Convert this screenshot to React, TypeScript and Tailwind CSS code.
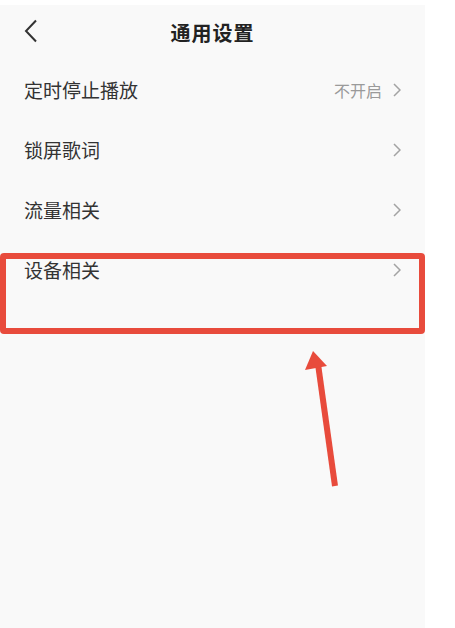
const rows = [
  { label: "定时停止播放", value: "不开启" },
  { label: "锁屏歌词" },
  { label: "流量相关" },
  { label: "设备相关" },
];

function Chevron() {
  return (
    <svg width="8" height="14" viewBox="0 0 8 14" className="shrink-0">
      <polyline points="1,1 7,7 1,13" fill="none" stroke="#a3a3a3" strokeWidth="1.5" />
    </svg>
  );
}

export default function App() {
  return (
    <div
      className="relative w-[455px] h-[628px] bg-white overflow-hidden"
      style={{ fontFamily: '"Noto Sans CJK SC", "Noto Sans", sans-serif' }}
    >
      {/* 설정 패널 */}
      <div className="mt-[5px] w-[425px] h-[623px] bg-[#f9f9f9] flex flex-col">
        {/* 헤더 */}
        <header className="relative h-[55px] flex items-center justify-center">
          <svg width="14" height="24" viewBox="0 0 14 24" className="absolute left-[24px] top-[14px]">
            <polyline points="12,1.5 2,12 12,22.5" fill="none" stroke="#333" strokeWidth="2" />
          </svg>
          <h1 className="text-[20px] font-bold text-[#222] tracking-[1px]">通用设置</h1>
        </header>
        {/* 목록 */}
        {rows.map((r) => (
          <div key={r.label} className="h-[60px] flex items-center justify-between pl-[24px] pr-[24px]">
            <span className="text-[19px] text-[#333]">{r.label}</span>
            <div className="flex items-center gap-[11px]">
              {r.value && <span className="text-[16px] text-[#9a9a9a]">{r.value}</span>}
              <Chevron />
            </div>
          </div>
        ))}
      </div>

      {/* 표시 상자 */}
      <div className="absolute left-0 top-[253px] w-[425px] h-[81px] border-[6px] border-[#e84b3c] rounded-[4px]" />

      {/* 화살표 */}
      <svg width="455" height="628" className="absolute inset-0 pointer-events-none">
        <line x1="335" y1="486" x2="318" y2="364" stroke="#e84b3c" strokeWidth="6" />
        <polygon points="313,351 305,370 327,366" fill="#e84b3c" />
      </svg>
    </div>
  );
}
